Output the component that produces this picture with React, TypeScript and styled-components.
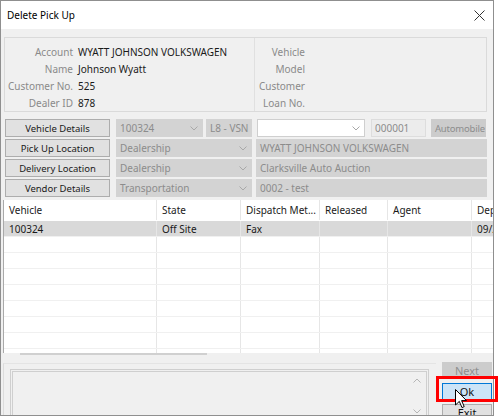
import React from 'react';
import styled, { createGlobalStyle } from 'styled-components';

const GlobalStyle = createGlobalStyle`
  html, body {
    margin: 0;
    padding: 0;
    background: #ffffff;
  }
  * {
    box-sizing: border-box;
  }
`;

const Page = styled.div`
  position: relative;
  width: 500px;
  height: 417px;
  overflow: hidden;
  background: #ffffff;
  font-family: 'Noto Sans', 'Open Sans', sans-serif;
  font-size: 10px;
  color: #1a1a1a;
`;

const Window = styled.div`
  width: 494px;
  height: 416px;
  border: 1px solid #8f8f8f;
  background: #f0f0f0;
  overflow: hidden;
  display: flex;
  flex-direction: column;
`;

const TitleBar = styled.div`
  height: 28px;
  flex-shrink: 0;
  background: #ffffff;
  display: flex;
  align-items: center;
  justify-content: space-between;
  padding: 0 8px 0 6px;
`;

const Title = styled.span`
  font-size: 10px;
  color: #000;
`;

const InfoBox = styled.div`
  margin: 8px 6px 0 3px;
  height: 75px;
  flex-shrink: 0;
  border: 1px solid #dadada;
  display: flex;
`;

const InfoSection = styled.div<{ $labelWidth: number; $divider?: boolean }>`
  flex: ${({ $divider }) => ($divider ? 1 : '0 0 249px')};
  border-left: ${({ $divider }) => ($divider ? '1px solid #e0e0e0' : 'none')};
  display: grid;
  grid-template-columns: ${({ $labelWidth }) => `${$labelWidth}px 1fr`};
  grid-auto-rows: 17px;
  column-gap: 5px;
  align-content: start;
  padding-top: 6px;
`;

const InfoLabel = styled.span`
  text-align: right;
  color: #8a8a8a;
  line-height: 17px;
`;

const InfoValue = styled.span`
  color: #1a1a1a;
  line-height: 17px;
  white-space: nowrap;
`;

const FieldRows = styled.div`
  margin-top: 7px;
  padding-left: 4px;
  display: flex;
  flex-direction: column;
  gap: 2px;
  flex-shrink: 0;
`;

const FieldRow = styled.div<{ $cols: string }>`
  display: grid;
  grid-template-columns: ${({ $cols }) => $cols};
  height: 18px;
`;

const ActionButton = styled.div`
  background: #e1e1e1;
  border: 1px solid #adadad;
  display: flex;
  align-items: center;
  justify-content: center;
  color: #1a1a1a;
  font-size: 9.5px;
  white-space: nowrap;
`;

type Tone = 'disabled' | 'white' | 'light' | 'dark';

const Field = styled.div<{ $tone: Tone; $gap?: number }>`
  margin-left: ${({ $gap }) => $gap ?? 0}px;
  background: ${({ $tone }) =>
    $tone === 'white' ? '#ffffff' : $tone === 'light' ? '#ececec' : $tone === 'dark' ? '#cccccc' : '#d3d3d3'};
  border: 1px solid
    ${({ $tone }) => ($tone === 'white' ? '#cfcfcf' : $tone === 'light' ? '#dddddd' : $tone === 'dark' ? '#cccccc' : '#d3d3d3')};
  color: #8c8c8c;
  display: flex;
  align-items: center;
  justify-content: space-between;
  padding: ${({ $tone }) => ($tone === 'dark' ? '0 0 0 3px' : '0 4px 0 3px')};
  font-size: ${({ $tone }) => ($tone === 'dark' ? '9.5px' : '10px')};
  letter-spacing: ${({ $tone }) => ($tone === 'dark' ? '-0.2px' : '0')};
  white-space: nowrap;
  overflow: hidden;
`;

const Chevron = () => (
  <svg width="8" height="5" viewBox="0 0 8 5">
    <polyline points="0.5,0.5 4,4 7.5,0.5" fill="none" stroke="#a8a8a8" strokeWidth="1" />
  </svg>
);

const GridWrap = styled.div`
  margin: 3px 0 0 2px;
  width: 495px;
  height: 153px;
  flex-shrink: 0;
  background: #ffffff;
  border-left: 1px solid #a9a9a9;
  overflow: hidden;
`;

const GridRow = styled.div<{ $selected?: boolean; $header?: boolean }>`
  display: grid;
  grid-template-columns: 153px 84px 79px 68px 84px 60px;
  height: ${({ $header }) => ($header ? 21 : 16)}px;
  background: ${({ $selected }) => ($selected ? '#d9d9d9' : '#ffffff')};
  border-bottom: 1px solid ${({ $header }) => ($header ? '#ffffff' : '#f0f0f0')};
`;

const Cell = styled.div`
  border-right: 1px solid #e6e6e6;
  padding-left: 5px;
  display: flex;
  align-items: center;
  white-space: nowrap;
  overflow: hidden;
  color: #1a1a1a;
`;

const ScrollStrip = styled.div`
  height: 3px;
  flex-shrink: 0;
  padding-left: 19px;
`;

const ScrollThumb = styled.div`
  width: 187px;
  height: 2px;
  background: #d0d0d0;
`;

const Footer = styled.div`
  flex: 1;
  display: flex;
  margin-top: 6px;
`;

const MemoPanel = styled.div`
  margin-left: 2px;
  width: 433px;
  margin-top: 1px;
  border-top: 1px solid #e4e4e4;
  border-left: 1px solid #dcdcdc;
  padding: 5px 0 0 6px;
`;

const MemoBox = styled.div`
  width: 419px;
  height: 60px;
  border: 3px double #cfcfcf;
  display: flex;
  justify-content: flex-end;
`;

const MemoScroll = styled.div`
  width: 14px;
  margin-right: 2px;
  display: flex;
  flex-direction: column;
  justify-content: space-between;
  align-items: center;
  padding: 6px 0 4px;
  height: 46px;
`;

const ButtonColumn = styled.div`
  margin-left: 6px;
  width: 50px;
  display: flex;
  flex-direction: column;
  gap: 4px;
`;

const DlgButton = styled.div<{ $variant: 'disabled' | 'focus' | 'normal' }>`
  height: 17px;
  flex-shrink: 0;
  display: flex;
  align-items: center;
  justify-content: center;
  font-size: 11px;
  background: ${({ $variant }) =>
    $variant === 'disabled' ? '#cccccc' : $variant === 'focus' ? '#cce4f7' : '#e1e1e1'};
  border: 1px solid
    ${({ $variant }) => ($variant === 'disabled' ? '#cccccc' : $variant === 'focus' ? '#0078d7' : '#adadad')};
  color: ${({ $variant }) => ($variant === 'disabled' ? '#8f8f8f' : '#111')};
`;

const Highlight = styled.div`
  position: absolute;
  left: 436px;
  top: 376px;
  width: 62px;
  height: 26px;
  border: 3px solid #ff0000;
  pointer-events: none;
`;

const Cursor = styled.svg`
  position: absolute;
  left: 455px;
  top: 389px;
`;

const columns = ['Vehicle', 'State', 'Dispatch Met...', 'Released', 'Agent', 'Dep'];
const firstRow = ['100324', 'Off Site', 'Fax', '', '', '09/2'];

const locationRows = [
  { button: 'Pick Up Location', combo: 'Dealership', text: 'WYATT JOHNSON VOLKSWAGEN' },
  { button: 'Delivery Location', combo: 'Dealership', text: 'Clarksville Auto Auction' },
  { button: 'Vendor Details', combo: 'Transportation', text: '0002 - test' },
];

const App: React.FC = (): JSX.Element => {
  return (
    <Page>
      <GlobalStyle />
      <Window>
        <TitleBar>
          <Title>Delete Pick Up</Title>
          <svg width="11" height="11" viewBox="0 0 11 11">
            <path d="M0.5 0.5 L10.5 10.5 M10.5 0.5 L0.5 10.5" stroke="#333" strokeWidth="1" />
          </svg>
        </TitleBar>

        <InfoBox>
          <InfoSection $labelWidth={68}>
            <InfoLabel>Account</InfoLabel>
            <InfoValue>WYATT JOHNSON VOLKSWAGEN</InfoValue>
            <InfoLabel>Name</InfoLabel>
            <InfoValue>Johnson Wyatt</InfoValue>
            <InfoLabel>Customer No.</InfoLabel>
            <InfoValue>525</InfoValue>
            <InfoLabel>Dealer ID</InfoLabel>
            <InfoValue>878</InfoValue>
          </InfoSection>
          <InfoSection $labelWidth={50} $divider>
            <InfoLabel>Vehicle</InfoLabel>
            <InfoValue />
            <InfoLabel>Model</InfoLabel>
            <InfoValue />
            <InfoLabel>Customer</InfoLabel>
            <InfoValue />
            <InfoLabel>Loan No.</InfoLabel>
            <InfoValue />
          </InfoSection>
        </InfoBox>

        <FieldRows>
          <FieldRow $cols="105px 93px 49px 113px 61px 60px">
            <ActionButton>Vehicle Details</ActionButton>
            <Field $tone="disabled" $gap={6}>
              100324
              <Chevron />
            </Field>
            <Field $tone="disabled" $gap={3}>
              L8 - VSN
            </Field>
            <Field $tone="white" $gap={5}>
              <span />
              <Chevron />
            </Field>
            <Field $tone="light" $gap={6}>
              000001
            </Field>
            <Field $tone="dark" $gap={5}>
              Automobile
            </Field>
          </FieldRow>
          {locationRows.map((row) => (
            <FieldRow key={row.button} $cols="105px 142px 235px">
              <ActionButton>{row.button}</ActionButton>
              <Field $tone="disabled" $gap={6}>
                {row.combo}
                <Chevron />
              </Field>
              <Field $tone="disabled" $gap={4}>
                {row.text}
              </Field>
            </FieldRow>
          ))}
        </FieldRows>

        <GridWrap>
          <GridRow $header>
            {columns.map((c) => (
              <Cell key={c}>{c}</Cell>
            ))}
          </GridRow>
          <GridRow $selected>
            {firstRow.map((c, i) => (
              <Cell key={i}>{c}</Cell>
            ))}
          </GridRow>
          {Array.from({ length: 8 }).map((_, r) => (
            <GridRow key={r}>
              {columns.map((c) => (
                <Cell key={c} />
              ))}
            </GridRow>
          ))}
        </GridWrap>
        <ScrollStrip>
          <ScrollThumb />
        </ScrollStrip>

        <Footer>
          <MemoPanel>
            <MemoBox>
              <MemoScroll>
                <svg width="8" height="5" viewBox="0 0 8 5">
                  <polyline points="0.5,4.5 4,1 7.5,4.5" fill="none" stroke="#b5b5b5" strokeWidth="1" />
                </svg>
                <svg width="8" height="5" viewBox="0 0 8 5">
                  <polyline points="0.5,0.5 4,4 7.5,0.5" fill="none" stroke="#b5b5b5" strokeWidth="1" />
                </svg>
              </MemoScroll>
            </MemoBox>
          </MemoPanel>
          <ButtonColumn>
            <DlgButton $variant="disabled">Next</DlgButton>
            <DlgButton $variant="focus">Ok</DlgButton>
            <DlgButton $variant="normal">Exit</DlgButton>
          </ButtonColumn>
        </Footer>
      </Window>

      <Highlight />
      <Cursor width="13" height="21" viewBox="0 0 13 21">
        <path d="M0.5 0.5 L0.5 16 L4.3 12.4 L7 18.6 L9.2 17.6 L6.6 11.6 L11.5 11.6 Z" fill="#fff" stroke="#000" strokeWidth="1" />
      </Cursor>
    </Page>
  );
};

export default App;
